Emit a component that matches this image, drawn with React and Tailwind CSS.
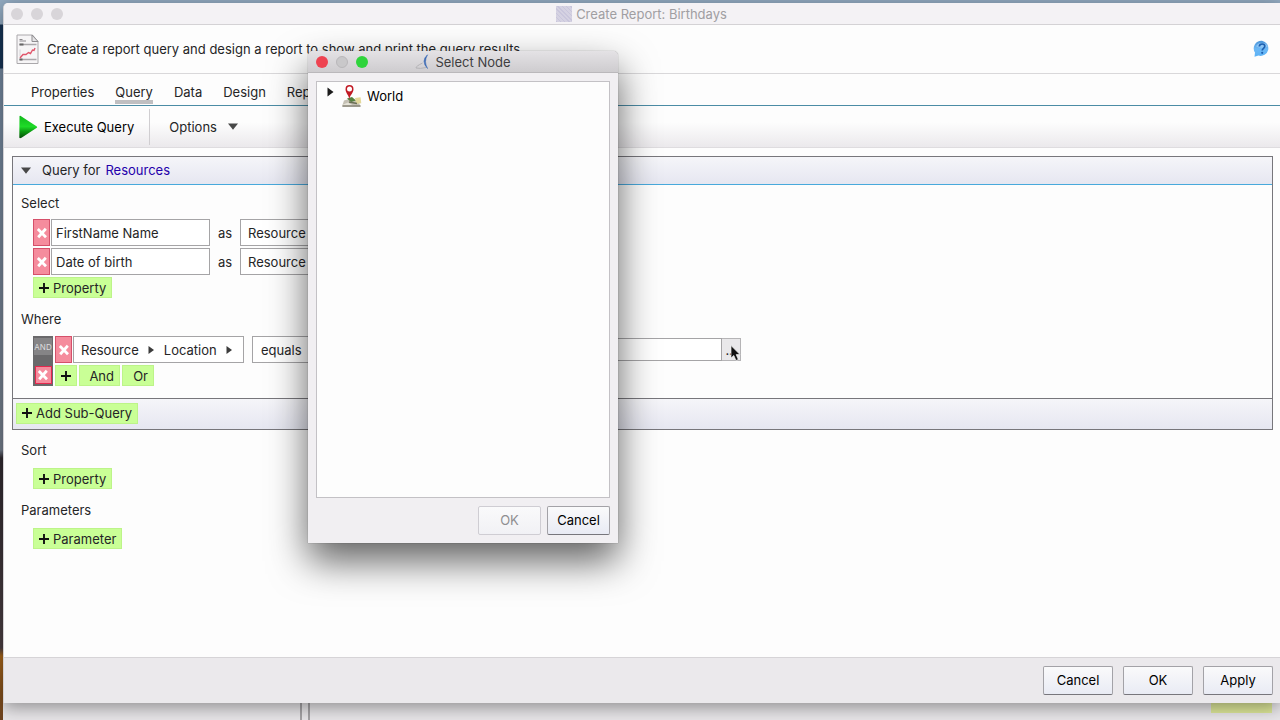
const uiFont = "font-[Inter,'Liberation_Sans',sans-serif]";

function Cross() {
  return (
    <svg viewBox="0 0 12 12" className="size-3" aria-hidden="true">
      <path d="M1.800 2 10 10.200M9.800 1.800 2.200 10.200" stroke="#fff" strokeWidth="2.800" fill="none" />
    </svg>
  );
}

function Plus() {
  return (
    <svg viewBox="0 0 12 12" className="size-3" aria-hidden="true">
      <path d="M6 1v10M1 6h10" stroke="#101010" strokeWidth="1.9" fill="none" />
    </svg>
  );
}

function RightArrow() {
  return (
    <svg viewBox="0 0 6 8" className="h-2 w-1.5" aria-hidden="true">
      <path d="M0.5 0 6 4 0.5 8Z" fill="#3c3c3c" />
    </svg>
  );
}

function DownArrow() {
  return (
    <svg viewBox="0 0 10 7" className="h-[7px] w-2.5" aria-hidden="true">
      <path d="M0 0.5h10L5 6.8Z" fill="#484848" />
    </svg>
  );
}

function ReportIcon() {
  return (
    <svg viewBox="0 0 24 32" className="h-8 w-6" aria-hidden="true">
      <path d="M1 2h15.500l5.500 6.500V30.500H1Z" fill="#f6f5f6" stroke="#aaa8ab" />
      <path d="M16 2v6.500h6Z" fill="#e5e4e6" stroke="#8f8d90" />
      <path d="M3.500 8h6.500M3.500 6.500h3" stroke="#8a888b" strokeWidth="1.200" />
      <path d="M3.500 11.500h17M3.500 26.500h17" stroke="#aaa8ab" strokeWidth="1.600" />
      <path d="M3.500 11.500h4M3.500 26.500h3" stroke="#666" strokeWidth="2" />
      <path d="M4 23.500v-7" stroke="#cfcdd0" strokeWidth="0.800" />
      <path d="m4 25 3-3.500h3l2.500-2 2 1 2-3.500 1.500.5 1-2.500" stroke="#e0566b" strokeWidth="1.400" fill="none" />
    </svg>
  );
}

function PlayIcon() {
  return (
    <svg viewBox="0 0 20 24" className="h-6 w-5" aria-hidden="true">
      <defs>
        <linearGradient id="play" x1="0" y1="0" x2="0" y2="1">
          <stop offset="0" stopColor="#12b91c" />
          <stop offset="0.48" stopColor="#1edb28" />
          <stop offset="0.7" stopColor="#0d9a12" />
          <stop offset="1" stopColor="#064f08" />
        </linearGradient>
      </defs>
      <path d="M1.500 1Q2.500.6 3.500 1.400L18.800 11.400Q19.600 12 18.800 12.700L3.500 22.700Q1.500 23.700 1.300 22.400Z" fill="url(#play)" />
    </svg>
  );
}

function HelpIcon() {
  return (
    <svg viewBox="0 0 18 18" className="size-[18px]" aria-hidden="true">
      <defs>
        <linearGradient id="help" x1="0" y1="0" x2="0" y2="1">
          <stop offset="0" stopColor="#4b94d8" />
          <stop offset="0.5" stopColor="#6db8f5" />
          <stop offset="1" stopColor="#5ab2f6" />
        </linearGradient>
      </defs>
      <path d="M9 .8a7.800 7.600 0 1 1-3.500 14.800L1.500 16.800 2 12.500A7.800 7.600 0 0 1 9 .8Z" fill="url(#help)" />
      <path d="M3 6.500a6.300 5 0 0 1 12 0Q9 9 3 6.500Z" fill="#a9d5fa" opacity="0.6" />
      <path d="M6.300 6.500Q6.500 4 9.200 4t2.600 2.300c0 2-2.600 2-2.600 4.200" stroke="#1d5fb0" strokeWidth="1.700" fill="none" />
      <circle cx="9.200" cy="12.800" r="1.100" fill="#1d5fb0" />
    </svg>
  );
}

function MapPinIcon() {
  return (
    <svg viewBox="0 0 22 24" className="h-6 w-[22px]" aria-hidden="true">
      <path d="M3 16.500 8 15l9 1.500 2.500 6H1Z" fill="#c4c0b4" />
      <path d="M1 21 7 18.500l6 3.500H1Z" fill="#e6e3d8" />
      <path d="M6 14.500 11 13l4 3.500-5 1.500Z" fill="#55803f" />
      <path d="m14 14 5.500-.8.8 6-5 .5Z" fill="#e3d899" />
      <path d="M1.500 22h18" stroke="#8b877b" strokeWidth="1.600" />
      <path d="m8 18 8 1.500" stroke="#6b6f55" strokeWidth="1.400" />
      <path d="M8.300 15.500C8 11 4.500 9 4.500 5.200a4 4.200 0 0 1 8 0C12.500 9 8.800 11 8.300 15.500Z" fill="#c11a24" />
      <circle cx="8.500" cy="5" r="2.500" fill="#fff" />
    </svg>
  );
}

function NodeIcon() {
  return (
    <svg viewBox="0 0 16 16" className="size-4" aria-hidden="true">
      <path d="M12.500.8Q5.500 7 12.500 14.500Q8.500 7.500 12.500.8Z" fill="#3b69b5" stroke="#3b69b5" strokeWidth="0.600" />
      <path d="M7.500 9Q.5 12.500 1 14 5 15 11 13.500" stroke="#b4b3b6" strokeWidth="1" fill="none" />
    </svg>
  );
}

function RemoveButton({ label, small }) {
  return (
    <button
      type="button"
      aria-label={label}
      className={`flex w-[17px] shrink-0 items-center justify-center border bg-[#f58c9d] ${
        small ? "h-[18px] border-[#e5284e]" : "h-[27px] border-[#d5506a]"
      }`}
    >
      <Cross />
    </button>
  );
}

function AddButton({ children, plus = true, className = "" }) {
  return (
    <button
      type="button"
      className={`flex h-[21px] items-center gap-[3px] border border-[#bdf489] bg-[#c9ff96] pr-[5px] pl-1 ${className}`}
    >
      {plus && <Plus />}
      {children}
    </button>
  );
}

function PushButton({ children, className = "", disabled }) {
  return (
    <button
      type="button"
      disabled={disabled}
      className={`h-[29px] rounded-[2px] border bg-linear-to-b from-[#fafafb] pb-0.5 ${
        disabled
          ? "border-[#cfcdd3] to-[#f1f1f5] text-[#8f8e91]"
          : "border-[#a3a2a7] border-b-[#77767c] to-[#e9ebf4] text-black"
      } ${className}`}
    >
      {children}
    </button>
  );
}

function SelectRow({ id, value }) {
  return (
    <div className="flex items-center">
      <RemoveButton label={`Remove ${value}`} />
      <input
        id={id}
        aria-label="Column name"
        defaultValue={value}
        className="ml-px h-[27px] w-[159px] border border-[#a5a4a6] bg-white px-1 outline-none"
      />
      <label htmlFor={id} className="w-[30px] text-center">as</label>
      <button type="button" className="flex h-[27px] w-50 items-center gap-2 border border-[#a5a4a6] bg-white px-[7px]">
        Resource
      </button>
    </div>
  );
}

function SelectNodeDialog() {
  return (
    <section
      role="dialog"
      aria-labelledby="node-title"
      className="absolute top-[51px] left-[308px] flex w-[310px] flex-col rounded-t-[5px] bg-[#f1eff2] shadow-[0_0_1px_rgba(0,0,0,0.6),0_18px_38px_rgba(0,0,0,0.62)]"
    >
      <header className="flex h-[22px] items-center rounded-t-[5px] border-b border-[#bab8bb] bg-linear-to-b from-[#e4e2e5] to-[#cecccf] px-2">
        <div className="flex gap-2">
          <button type="button" aria-label="Close" className="size-3 rounded-full bg-[#ee4351]" />
          <button type="button" aria-label="Minimize" className="size-3 rounded-full border border-[#b9b7ba] bg-[#c9c8ca]" />
          <button type="button" aria-label="Zoom" className="size-3 rounded-full bg-[#2fd43c]" />
        </div>
        <h2 id="node-title" className="flex flex-1 items-center justify-center gap-1 pr-[52px] text-[#3e3d3f]">
          <NodeIcon />
          Select Node
        </h2>
      </header>
      <div className="m-2 h-[417px] border border-[#c3c1c5] bg-[#fdfdfd]">
        <ul role="tree" className="px-2.5 pt-1">
          <li role="treeitem" className="flex h-5 items-center">
            <button type="button" aria-label="Expand World" className="mb-2 w-3.5">
              <svg viewBox="0 0 7 10" className="h-2.5 w-[7px]" aria-hidden="true">
                <path d="M.5.5 6.500 5 .5 9.500Z" fill="#1c1c1c" />
              </svg>
            </button>
            <MapPinIcon />
            <span className="ml-1 text-black">World</span>
          </li>
        </ul>
      </div>
      <footer className="flex justify-end gap-1.5 px-2 pb-2">
        <PushButton disabled className="w-[63px]">OK</PushButton>
        <PushButton className="w-[63px]">Cancel</PushButton>
      </footer>
    </section>
  );
}

export default function App() {
  const tabs = ["Properties", "Query", "Data", "Design", "Report"];
  return (
    <div
      className={`relative flex min-h-screen flex-col overflow-hidden bg-[linear-gradient(#93abc2_0,#93abc2_24px,#173556_25px,#173556_68px,#7489a0_69px,#747e8c_450px,#302a30_458px,#4c4044_648px,#a8661b_656px,#6d4320_100%)] pt-[3px] pl-[3px] text-[13px] leading-4 text-[#252526] ${uiFont}`}
    >
      <div className="relative flex flex-1 flex-col rounded-tl-[5px] border-l border-[#d4d2d5] bg-[#fdfdfd] shadow-[0_4px_18px_rgba(0,0,0,0.4)]">
        <header className="flex h-[22px] items-center rounded-tl-[5px] border-b border-[#d4d2d5] bg-[#f4f2f5] pl-[7px]">
          <div className="flex gap-2">
            <button type="button" aria-label="Close window" className="size-3 rounded-full bg-[#d8d5d9]" />
            <button type="button" aria-label="Minimize window" className="size-3 rounded-full bg-[#d8d5d9]" />
            <button type="button" aria-label="Zoom window" className="size-3 rounded-full bg-[#d8d5d9]" />
          </div>
          <h1 className="flex flex-1 items-center justify-center gap-1 pr-15 text-[#a09ea2]">
            <span className="size-4 bg-[repeating-linear-gradient(45deg,#c9c6dc_0,#c9c6dc_1px,#d5d2e2_1px,#d5d2e2_3px)]" />
            Create Report: Birthdays
          </h1>
        </header>

        <div className="flex h-[49px] items-center border-b border-[#d9d8da] pr-[9px] pl-3">
          <ReportIcon />
          <p className="ml-[7px] flex-1">
            Create a report query and design a report to show and print the query results
          </p>
          <button type="button" aria-label="Help">
            <HelpIcon />
          </button>
        </div>

        <nav className="flex h-8 items-end gap-[21px] border-b border-[#4b8ca5] pb-px pl-[27px]">
          {tabs.map((tab) => (
            <button
              key={tab}
              type="button"
              aria-current={tab === "Query" ? "page" : undefined}
              className={`border-b-4 ${tab === "Query" ? "border-[#c0bfc1]" : "border-transparent"}`}
            >
              {tab}
            </button>
          ))}
        </nav>

        <div className="flex h-[42px] items-center border-b border-[#dedcdf] bg-linear-to-b from-[#fdfdfd] from-40% to-[#ebe9ec] pl-3.5">
          <button type="button" className="flex items-center gap-1.5 text-black">
            <PlayIcon />
            Execute Query
          </button>
          <span className="mr-[19px] ml-[15px] h-9 w-px bg-[#d0ced1]" />
          <button type="button" className="flex items-center gap-[11px]">
            Options
            <DownArrow />
          </button>
        </div>

        <main className="flex-1 pt-2 pr-[7px] pl-2">
          <section className="border border-[#77767b]">
            <header className="flex h-7 items-center border-b border-[#48a9dc] bg-linear-to-b from-[#f5f5f9] to-[#e6e7f1] pb-px pl-2">
              <button type="button" aria-label="Collapse query" className="mr-[11px]">
                <DownArrow />
              </button>
              Query for
              <a href="#resources" className="ml-[5px] text-[#2400ab]">Resources</a>
            </header>

            <div className="px-2 pt-2.5 pb-3">
              <h2>Select</h2>
              <div className="mt-2 ml-3 flex flex-col gap-0.5">
                <SelectRow id="col-1" value="FirstName Name" />
                <SelectRow id="col-2" value="Date of birth" />
                <AddButton className="self-start">Property</AddButton>
              </div>

              <h2 className="mt-[13px]">Where</h2>
              <div className="mt-[9px] ml-3 flex gap-0.5">
                <div className="flex w-5 flex-col items-center justify-between bg-[#6a696b] py-0.5">
                  <span className="flex h-[17px] w-[18px] items-center justify-center bg-[#858486] text-[8px] text-[#dddcde]">
                    AND
                  </span>
                  <RemoveButton small label="Remove group" />
                </div>
                <div className="flex flex-col gap-0.5">
                  <div className="flex items-center">
                    <RemoveButton label="Remove condition" />
                    <div className="ml-px flex h-[27px] w-[171px] items-center border border-[#a5a4a6] bg-white px-[7px]">
                      <button type="button" className="flex items-center gap-[9px]">
                        Resource
                        <RightArrow />
                      </button>
                      <button type="button" className="ml-2.5 flex items-center gap-[9px]">
                        Location
                        <RightArrow />
                      </button>
                    </div>
                    <select
                      aria-label="Operator"
                      className="ml-2 h-[27px] w-25 appearance-none border border-[#a5a4a6] bg-white px-2"
                    >
                      <option>equals</option>
                    </select>
                    <input
                      aria-label="Location value"
                      className="ml-2 h-[23px] w-[362px] border border-[#a5a4a6] bg-white px-1"
                    />
                    <button
                      type="button"
                      aria-label="Browse locations"
                      className="relative h-[23px] w-[19px] border border-l-0 border-[#b5b4b6] bg-[#e9e8ea] leading-4"
                    >
                      ...
                      <svg viewBox="0 0 12 18" className="absolute top-1.5 left-2 h-[18px] w-3" aria-hidden="true">
                        <path
                          d="M1 .5V13L3.800 10.500 6 15.500 8.300 14.500 6.200 9.600H10Z"
                          fill="#111"
                          stroke="#f4f4f4"
                          strokeWidth="0.700"
                        />
                      </svg>
                    </button>
                  </div>
                  <div className="flex gap-0.5">
                    <button
                      type="button"
                      aria-label="Add condition"
                      className="flex h-[21px] w-[22px] items-center justify-center border border-[#bdf489] bg-[#c9ff96]"
                    >
                      <Plus />
                    </button>
                    <AddButton plus={false} className="w-[41px] justify-end">And</AddButton>
                    <AddButton plus={false} className="w-8 justify-end">Or</AddButton>
                  </div>
                </div>
              </div>
            </div>

            <footer className="flex h-[31px] items-center border-t border-[#77767b] bg-linear-to-b from-[#f5f5f9] to-[#e6e7f1] pb-0.5 pl-[3px]">
              <AddButton>Add Sub-Query</AddButton>
            </footer>
          </section>

          <section className="px-[9px] pt-3">
            <h2>Sort</h2>
            <AddButton className="mt-2.5 ml-3">Property</AddButton>
            <h2 className="mt-[13px]">Parameters</h2>
            <AddButton className="mt-2.5 ml-3">Parameter</AddButton>
          </section>
        </main>

        <footer className="flex h-[46px] items-center justify-end gap-2.5 border-t border-[#d6d4d7] bg-[#ebe9ec] pr-[7px]">
          <PushButton className="w-[70px]">Cancel</PushButton>
          <PushButton className="w-[70px]">OK</PushButton>
          <PushButton className="w-[70px]">Apply</PushButton>
        </footer>
      </div>

      <div className="flex h-[17px] items-start bg-[#e8e6e9]" aria-hidden="true">
        <div className="h-full w-[299px] border-r-2 border-[#a5a3a6]" />
        <div className="h-full w-2 border-r-2 border-[#a5a3a6]" />
        <div className="mr-2 ml-auto h-2.5 w-[61px] bg-[#dfe99a]" />
      </div>

      <SelectNodeDialog />
    </div>
  );
}
